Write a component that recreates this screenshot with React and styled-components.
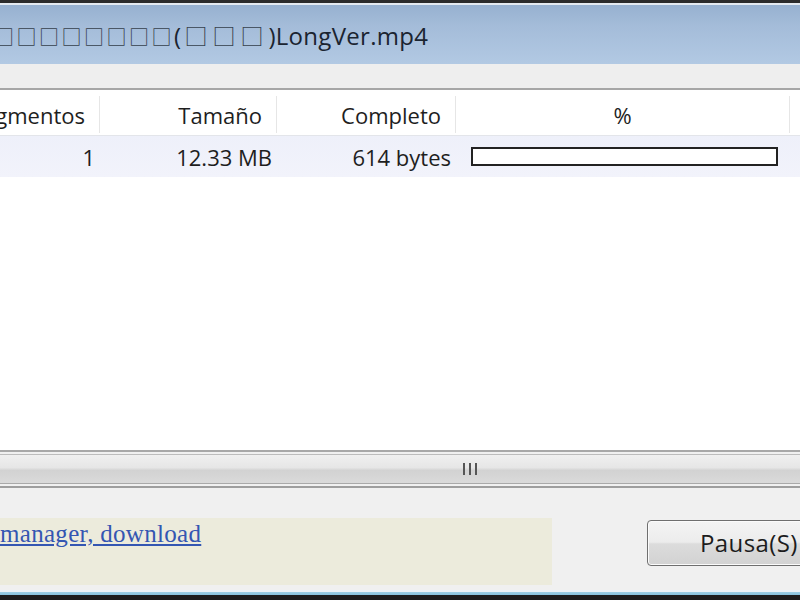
import React from "react";
import styled, { createGlobalStyle } from "styled-components";

const Global = createGlobalStyle`
  html, body { margin: 0; padding: 0; background: #f0f0f0; overflow: hidden; }
  #root { width: 800px; height: 600px; }
`;

const Window = styled.div`
  width: 800px;
  height: 600px;
  display: flex;
  flex-direction: column;
  overflow: hidden;
  font-family: "Open Sans", "Noto Sans", "Noto Sans CJK SC", sans-serif;
  color: #1c1c1c;
`;

const TopEdge = styled.div`
  height: 3px;
  background: #2b2b2b;
  border-bottom: 2px solid #e4e9f0;
  flex: none;
`;

const TitleBar = styled.div`
  height: 59px;
  flex: none;
  display: flex;
  align-items: center;
  background: linear-gradient(to bottom, #97b1d0 0%, #a4bcd9 35%, #b2c9e3 100%);
  overflow: hidden;
`;

const Title = styled.div`
  margin-left: -6px;
  font-size: 24px;
  white-space: nowrap;
  color: #1b2430;
  letter-spacing: 0.3px;
`;

const Tofu = styled.span`
  font-family: "Noto Sans CJK SC", sans-serif;
  font-size: ${(p) => p.$size}px;
  letter-spacing: ${(p) => p.$gap}px;
  margin-left: ${(p) => p.$lead || 0}px;
  color: #36404c;
`;

const Strip = styled.div`
  height: 24px;
  flex: none;
  background: #eeeeee;
  border-bottom: 2px solid #a6a6a6;
`;

const List = styled.div`
  flex: 1;
  min-height: 0;
  background: #ffffff;
  display: flex;
  flex-direction: column;
`;

const Cols = "100px 177px 179px 334px 10px";

const HeaderRow = styled.div`
  height: 45px;
  flex: none;
  display: grid;
  grid-template-columns: ${Cols};
  border-bottom: 1px solid #e3e5ea;
  background: #ffffff;
`;

const HeaderCell = styled.div`
  display: flex;
  align-items: center;
  justify-content: ${(p) => (p.$center ? "center" : "flex-end")};
  padding-right: ${(p) => (p.$center ? 0 : 14)}px;
  font-size: 22px;
  white-space: nowrap;
  overflow: hidden;
  color: #1e1e1e;
  margin: 6px 0 2px;
  border-right: ${(p) => (p.$last ? "none" : "1px solid #e6e6e6")};
`;

const DataRow = styled.div`
  height: 41px;
  flex: none;
  display: grid;
  grid-template-columns: ${Cols};
  background: linear-gradient(to bottom, #eef0fa, #f2f3fb);
`;

const DataCell = styled.div`
  display: flex;
  align-items: center;
  justify-content: flex-end;
  padding-right: 5px;
  font-size: 22px;
  white-space: nowrap;
  color: #1e1e1e;
`;

const BarCell = styled.div`
  display: flex;
  align-items: center;
  padding-left: 15px;
`;

const Bar = styled.div`
  width: 307px;
  height: 19px;
  box-sizing: border-box;
  border: 2px solid #222;
  background: #ffffff;
`;

const ScrollBar = styled.div`
  height: 38px;
  flex: none;
  box-sizing: border-box;
  border-top: 2px solid #a8a8a8;
  border-bottom: 2px solid #9e9e9e;
  background: #f0f0f0;
  display: flex;
  flex-direction: column;
`;

const Thumb = styled.div`
  margin: 2px 0 2px;
  flex: 1;
  border-top: 1px solid #bcbcbc;
  border-bottom: 1px solid #a9a9a9;
  background: linear-gradient(to bottom, #f0f0f0 0%, #e6e6e6 45%, #d2d2d2 55%, #dadada 100%);
  display: flex;
  align-items: center;
  justify-content: center;
  padding-left: 140px;
`;

const Footer = styled.div`
  height: 102px;
  flex: none;
  box-sizing: border-box;
  background: #f0f0f0;
  display: flex;
  align-items: flex-start;
  padding-top: 30px;
  gap: 95px;
`;

const InfoBox = styled.div`
  width: 552px;
  height: 67px;
  flex: none;
  background: #ecebdc;
  box-sizing: border-box;
  padding-top: 2px;
`;

const Link = styled.a`
  font-family: "Liberation Serif", "Times New Roman", serif;
  font-size: 25px;
  color: #3456b2;
  text-decoration: underline;
  letter-spacing: 0.3px;
`;

const Button = styled.button`
  margin-top: 2px;
  width: 170px;
  height: 46px;
  flex: none;
  box-sizing: border-box;
  border: 1px solid #6f6f6f;
  border-radius: 4px;
  background: linear-gradient(to bottom, #f4f4f4 0%, #ececec 48%, #dcdcdc 52%, #d2d2d2 100%);
  box-shadow: inset 0 0 0 1px #fbfbfb;
  font-family: "Open Sans", "Noto Sans", sans-serif;
  font-size: 24px;
  letter-spacing: 0.4px;
  color: #1c1c1c;
  text-align: left;
  padding: 0 0 2px 52px;
  white-space: nowrap;
`;

const BottomEdge = styled.div`
  height: 10px;
  flex: none;
  background: linear-gradient(to bottom, #eef4f8 0px, #eef4f8 2px, #9fd0e6 2px, #86c2df 5px, #1d1d1d 5px);
`;

export default function App() {
  return (
    <Window>
      <Global />
      <TopEdge />
      <TitleBar>
        <Title>
          <Tofu $size={20} $gap={2.5}>□□□□□□□□</Tofu>(
          <Tofu $size={23} $gap={5} $lead={3}>□□□</Tofu>)LongVer.mp4
        </Title>
      </TitleBar>
      <Strip />
      <List>
        <HeaderRow>
          <HeaderCell>Segmentos</HeaderCell>
          <HeaderCell>Tamaño</HeaderCell>
          <HeaderCell>Completo</HeaderCell>
          <HeaderCell $center>%</HeaderCell>
          <HeaderCell $last />
        </HeaderRow>
        <DataRow>
          <DataCell>1</DataCell>
          <DataCell>12.33 MB</DataCell>
          <DataCell>614 bytes</DataCell>
          <BarCell>
            <Bar />
          </BarCell>
        </DataRow>
      </List>
      <ScrollBar>
        <Thumb>
          <svg width="18" height="14" viewBox="0 0 18 14">
            <g stroke="#555" strokeWidth="2">
              <line x1="3" y1="1" x2="3" y2="13" />
              <line x1="9" y1="1" x2="9" y2="13" />
              <line x1="15" y1="1" x2="15" y2="13" />
            </g>
          </svg>
        </Thumb>
      </ScrollBar>
      <Footer>
        <InfoBox>
          <Link href="#">manager, download</Link>
        </InfoBox>
        <Button>Pausa(S)</Button>
      </Footer>
      <BottomEdge />
    </Window>
  );
}
